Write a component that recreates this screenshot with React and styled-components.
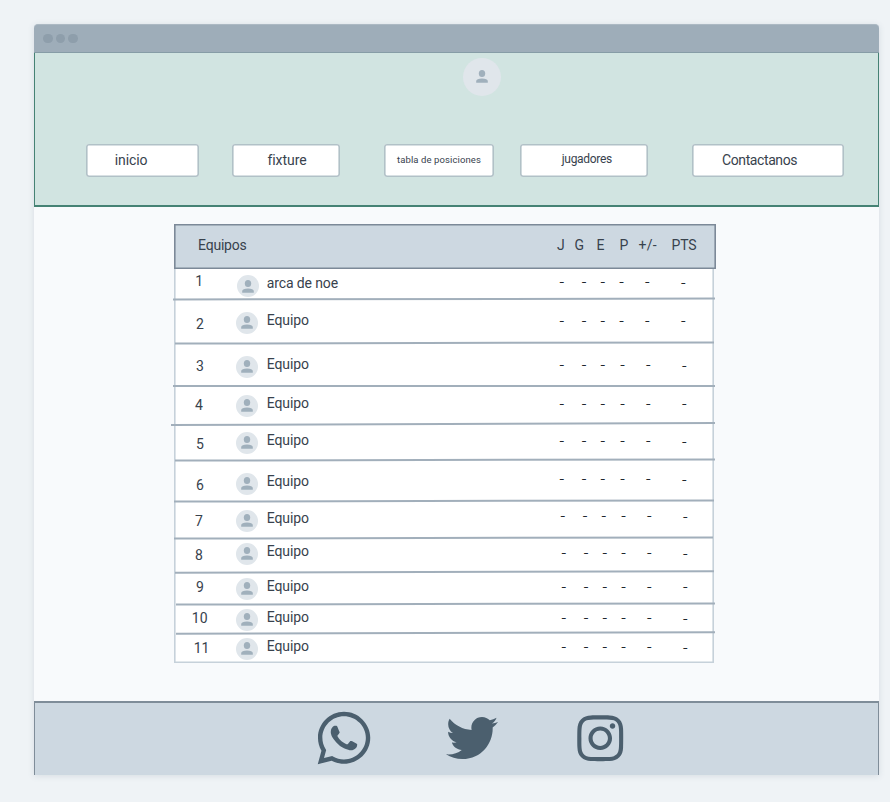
import React from "react";
import styled, { createGlobalStyle } from "styled-components";
import { FaWhatsapp, FaTwitter, FaInstagram } from "react-icons/fa";

const GlobalStyle = createGlobalStyle`
  *, *::before, *::after { box-sizing: border-box; }
  body {
    margin: 0;
    background: #eff3f6;
    color: #38424d;
    font: 14px/16px Roboto, "Liberation Sans", sans-serif;
    font-variant-ligatures: none;
    overflow: hidden;
  }
`;

const Page = styled.div`
  width: 890px;
  height: 802px;
  padding: 24px 11px 27px 34px;
`;

const Window = styled.div`
  display: flex;
  flex-direction: column;
  width: 845px;
  height: 751px;
  background: #f8fafc;
  border-radius: 4px 4px 0 0;
  box-shadow: 0 1px 6px rgba(90, 110, 130, 0.16);
`;

const TitleBar = styled.div`
  display: flex;
  align-items: center;
  gap: 3px;
  flex: none;
  height: 29px;
  padding-left: 9px;
  background: #9eadb9;
  border-top: 1px solid #acb9c3;
  border-bottom: 1px solid #869ca6;
  border-radius: 4px 4px 0 0;
`;

const Dot = styled.span`
  width: 9.5px;
  height: 9.5px;
  border-radius: 50%;
  background: #8e9eab;
`;

const Header = styled.header`
  display: flex;
  flex-direction: column;
  flex: none;
  height: 154px;
  padding-top: 4.5px;
  background: #d1e4e1;
  border: solid #458274;
  border-width: 0 1px 2px;
`;

const AvatarCircle = styled.span`
  display: flex;
  align-items: center;
  justify-content: center;
  width: ${(p) => p.$size}px;
  height: ${(p) => p.$size}px;
  margin: ${(p) => p.$top || 0}px 0 0 ${(p) => p.$left || 0}px;
  border-radius: 50%;
  background: #e0e6eb;
  color: #a0b0bc;
`;

const Nav = styled.nav`
  display: grid;
  grid-template-columns: 113px 33px 108px 44px 110px 26px 128px 44px 151.5px;
  justify-content: start;
  margin: 48.5px 0 0 51px;
`;

const NavButton = styled.a`
  grid-column: ${(p) => p.$col};
  height: 33px;
  padding: ${(p) => p.$top}px 0 0 ${(p) => p.$left}px;
  background: #fff;
  border-radius: 3px;
  box-shadow: inset 0 0 0 1.6px #b1c1c7;
  font-size: ${(p) => p.$size || 14}px;
  letter-spacing: ${(p) => p.$track || 0}px;
  white-space: nowrap;
`;

const Main = styled.main`
  flex: 1;
  padding: 17px 0 0 140px;
`;

const Table = styled.section`
  display: flex;
  flex-direction: column;
  width: 542px;
`;

const TableHead = styled.div`
  display: grid;
  grid-template-columns: 359px 17.5px 22px 23px 19px 33px auto;
  z-index: 1;
  height: 45px;
  padding: 13px 0 0 24px;
  background: #cdd8e1;
  box-shadow: inset 0 0 0 1.6px #7c8998;
`;

const HeadCell = styled.span`
  letter-spacing: ${(p) => p.$track || 0}px;
`;

const TableBody = styled.div`
  width: 540px;
  height: 396px;
  margin-top: -2px;
  padding: 2px 2px 2px;
  background: #fff;
  box-shadow: inset 0 0 0 1.6px #c6d1da;
`;

const Row = styled.div`
  position: relative;
  display: grid;
  grid-template-columns: 60px 31px 292.7px 22.3px 18.7px ${(p) => p.$gap}px 25.8px 36px auto;
  align-items: start;
  height: ${(p) => p.$height}px;
`;

const Cell = styled.span`
  margin: ${(p) => p.$top}px 0 0 ${(p) => p.$left || 0}px;
  letter-spacing: ${(p) => p.$track || 0}px;
  white-space: nowrap;
`;

const Dash = styled(Cell)`
  display: flex;
  justify-content: center;
  width: 0;
  color: #20272e;
  font-family: Inter, sans-serif;
  font-size: 12px;
`;

const Rule = styled.i`
  position: absolute;
  bottom: -0.8px;
  left: ${(p) => p.$left}px;
  right: ${(p) => p.$right}px;
  height: 1.6px;
  background: #a2afbb;
  transform: rotate(${(p) => p.$angle}deg);
`;

const Footer = styled.footer`
  display: flex;
  align-items: flex-start;
  flex: none;
  height: 74px;
  padding: 0 0 0 279px;
  background: #cdd8e1;
  border: solid #7f8d99;
  border-width: 2px 1px 0;
  color: #4b5f6e;
`;

const Social = styled.a`
  display: flex;
  margin: ${(p) => p.$top}px 0 0 ${(p) => p.$left || 0}px;
`;

function Avatar(props) {
  return (
    <AvatarCircle {...props}>
      <svg width="12" height="13" viewBox="0 0 12 13" fill="currentColor">
        <ellipse cx="6" cy="3.6" rx="3.2" ry="3.5" />
        <path d="M0.2 12.7V11.1C0.2 9.4 2.5 8.4 6 8.4S11.8 9.4 11.8 11.1V12.7Z" />
      </svg>
    </AvatarCircle>
  );
}

const links = [
  { label: "inicio", left: 28.8, top: 8, track: -0.1 },
  { label: "fixture", left: 35.4, top: 8, track: -0.05 },
  { label: "tabla de posiciones", left: 13, top: 8, size: 9.5, track: 0.1 },
  { label: "jugadores", left: 41.8, top: 7, size: 12, track: -0.3 },
  { label: "Contactanos", left: 30, top: 8, track: -0.4 },
];

// Row bottoms, baselines and rule ends in window pixels.
const rows = [
  { end: 299.2, num: [195.3, 286], av: [247.7, 286], name: 288, dash: 282.5, pts: 1, shift: 0, rule: [173, 299.6, 715, 298.8] },
  { end: 342.5, num: [196, 329], av: [246.7, 323], name: 325, dash: 321.5, pts: 0, shift: 0, rule: [175, 343.2, 714, 342] },
  { end: 385.8, num: [196, 371], av: [246.7, 367], name: 369, dash: 365.5, pts: 1, shift: 0, wide: 1, rule: [173, 386, 715, 386] },
  { end: 424, num: [195, 410], av: [246.7, 406], name: 408, dash: 404.5, pts: 0, shift: 0, wide: 1, rule: [171, 425.2, 715, 423.2] },
  { end: 459.8, num: [196, 449], av: [246.7, 443], name: 445, dash: 441.5, pts: 1, shift: 0, wide: 1, rule: [175, 460.4, 715, 459.2] },
  { end: 500.5, num: [196, 490], av: [246.7, 484], name: 486, dash: 479.5, pts: 1, shift: 0, wide: 1, rule: [174, 501.1, 714, 499.9] },
  { end: 537.6, num: [195, 526], av: [246.7, 521], name: 523, dash: 516.5, pts: 1, shift: 1, wide: 1, rule: [174, 538.2, 713, 537] },
  { end: 571.6, num: [195, 560], av: [246.7, 554], name: 556, dash: 553.5, pts: 1, shift: 2, rule: [175, 572.3, 714, 571] },
  { end: 603.4, num: [196, 592], av: [246.7, 589], name: 591, dash: 587.5, pts: 0, shift: 2, rule: [176, 604, 715, 602.9] },
  { end: 633.3, num: [191.8, 623], av: [246.7, 620], name: 622, dash: 618.5, pts: 1, shift: 2, rule: [176, 634, 715, 632.7] },
  { end: 661, num: [193.7, 653], av: [246.7, 649], name: 651, dash: 647.5, pts: 1, shift: 2 },
];

function TeamRow({ row, index }) {
  const top = index ? rows[index - 1].end : 269;
  const baseline = (y) => Math.round(y - 13) - top;
  const [rl, ry, rr, ryEnd] = row.rule || [];
  return (
    <Row $height={row.end - top} $gap={row.wide ? 19.8 : 18.8}>
      <Cell $top={baseline(row.num[1])} $left={row.num[0] - 176}>{index + 1}</Cell>
      <Avatar $size={22} $top={row.av[1] - 11 - top} $left={row.av[0] - 247} />
      <Cell $top={baseline(row.name)} $left={-0.3} $track={index ? -0.1 : -0.12}>{index ? "Equipo" : "arca de noe"}</Cell>
      {["J", "G", "E", "P", "+/-", "PTS"].map((key, i) => (
        <Dash key={key} $top={baseline(row.dash + 4.5 + (i === 5 ? row.pts : 0))} $left={row.shift + 2}>-</Dash>
      ))}
      {row.rule && (
        <Rule $left={rl - 176} $right={712 - rr} $angle={(Math.atan2(ryEnd - ry, rr - rl) * 180) / Math.PI} />
      )}
    </Row>
  );
}

export default function App() {
  return (
    <Page>
      <GlobalStyle />
      <Window>
        <TitleBar><Dot /><Dot /><Dot /></TitleBar>
        <Header>
          <Avatar $size={38} $left={427.5} />
          <Nav>
            {links.map((l, i) => (
              <NavButton key={l.label} $col={i * 2 + 1} $left={l.left} $top={l.top} $size={l.size} $track={l.track}>{l.label}</NavButton>
            ))}
          </Nav>
        </Header>
        <Main>
          <Table>
            <TableHead>
              {["Equipos", "J", "G", "E", "P", "+/-", "PTS"].map((h) => (
                <HeadCell key={h} $track={h === "+/-" ? 0.3 : -0.2}>{h}</HeadCell>
              ))}
            </TableHead>
            <TableBody>
              {rows.map((row, i) => <TeamRow key={i} row={row} index={i} />)}
            </TableBody>
          </Table>
        </Main>
        <Footer>
          <Social $top={5}><FaWhatsapp size={60} viewBox="-32 0 512 512" /></Social>
          <Social $top={9} $left={72}><FaTwitter size={52} /></Social>
          <Social $top={9} $left={76}><FaInstagram size={52.5} /></Social>
        </Footer>
      </Window>
    </Page>
  );
}
